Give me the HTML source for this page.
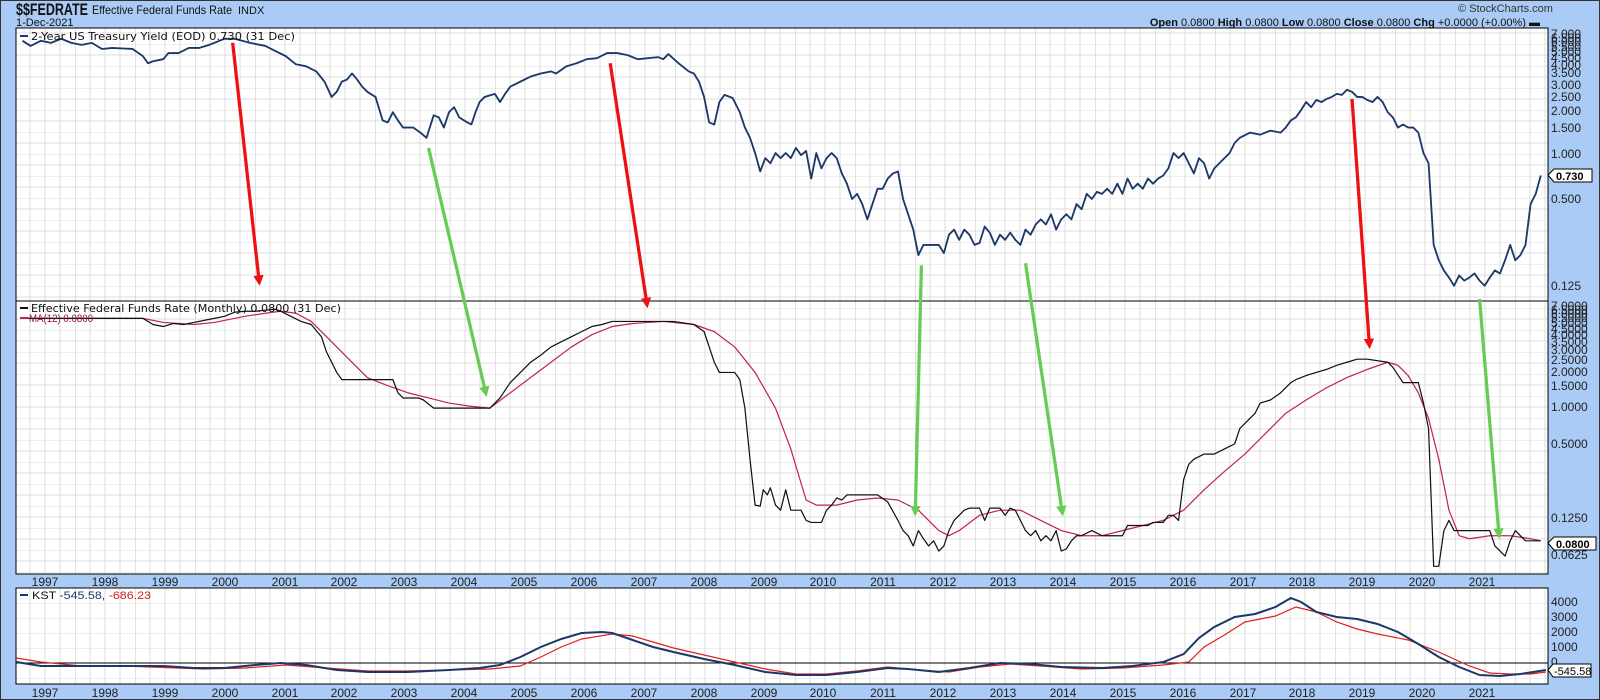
<!DOCTYPE html>
<html><head><meta charset="utf-8"><style>
html,body{margin:0;padding:0;background:#a9cbf5;}
svg{display:block;font-family:"Liberation Sans",sans-serif;}
.ax{font-size:12px;fill:#222;}
</style></head><body>
<svg width="1600" height="700" viewBox="0 0 1600 700" xmlns="http://www.w3.org/2000/svg">
<defs>
<pattern id="g" x="15" y="0" width="60" height="22" patternUnits="userSpaceOnUse">
<rect width="60" height="22" fill="#fff"/>
<path d="M15 0V22M30 0V22M45 0V22M0 11H60M0 0H60" stroke="#dedede" stroke-width="1"/>
<path d="M0 0V22" stroke="#c6c6c6" stroke-width="1"/>
</pattern>
<pattern id="g3" x="15" y="588" width="60" height="15" patternUnits="userSpaceOnUse">
<rect width="60" height="15" fill="#fff"/>
<path d="M15 0V15M30 0V15M45 0V15M0 0H60" stroke="#dedede"/>
<path d="M0 0V15" stroke="#c6c6c6"/>
</pattern>
<marker id="ar" viewBox="0 0 10 10" refX="6" refY="5" markerWidth="3.2" markerHeight="3.2" orient="auto"><path d="M0 0L10 5L0 10z" fill="#ee1111"/></marker>
<marker id="ag" viewBox="0 0 10 10" refX="6" refY="5" markerWidth="3.2" markerHeight="3.2" orient="auto"><path d="M0 0L10 5L0 10z" fill="#66cc55"/></marker>
</defs>
<rect x="0" y="0" width="1600" height="700" fill="#a9cbf5"/>
<rect x="0.5" y="0.5" width="1599" height="699" fill="none" stroke="#333"/>
<text x="16" y="15" font-size="17" font-weight="bold" fill="#111" textLength="72" lengthAdjust="spacingAndGlyphs">$$FEDRATE</text>
<text x="92" y="14" font-size="12" fill="#111" textLength="140" lengthAdjust="spacingAndGlyphs">Effective Federal Funds Rate</text>
<text x="238" y="14" font-size="11" fill="#111">INDX</text>
<text x="16" y="26" font-size="11" fill="#111">1-Dec-2021</text>
<text x="1458" y="12" font-size="11" fill="#333">© StockCharts.com</text>
<text x="1540" y="26" font-size="11" fill="#111" text-anchor="end"><tspan font-weight="bold">Open</tspan> 0.0800  <tspan font-weight="bold">High</tspan> 0.0800  <tspan font-weight="bold">Low</tspan> 0.0800  <tspan font-weight="bold">Close</tspan> 0.0800  <tspan font-weight="bold">Chg</tspan> +0.0000 (+0.00%) ▬</text>

<rect x="16" y="28" width="1532" height="546" fill="url(#g)" stroke="#000"/>
<line x1="16" y1="301" x2="1548" y2="301" stroke="#000"/>
<rect x="16" y="588" width="1532" height="96" fill="url(#g3)" stroke="#000"/>
<line x1="16" y1="663" x2="1548" y2="663" stroke="#000"/>

<g class="ax" text-anchor="middle">
<text x="45" y="586">1997</text><text x="105" y="586">1998</text><text x="165" y="586">1999</text><text x="225" y="586">2000</text><text x="285" y="586">2001</text><text x="344" y="586">2002</text><text x="404" y="586">2003</text><text x="464" y="586">2004</text><text x="524" y="586">2005</text><text x="584" y="586">2006</text><text x="644" y="586">2007</text><text x="704" y="586">2008</text><text x="764" y="586">2009</text><text x="823" y="586">2010</text><text x="883" y="586">2011</text><text x="943" y="586">2012</text><text x="1003" y="586">2013</text><text x="1063" y="586">2014</text><text x="1123" y="586">2015</text><text x="1183" y="586">2016</text><text x="1243" y="586">2017</text><text x="1302" y="586">2018</text><text x="1362" y="586">2019</text><text x="1422" y="586">2020</text><text x="1482" y="586">2021</text>
<text x="45" y="697">1997</text><text x="105" y="697">1998</text><text x="165" y="697">1999</text><text x="225" y="697">2000</text><text x="285" y="697">2001</text><text x="344" y="697">2002</text><text x="404" y="697">2003</text><text x="464" y="697">2004</text><text x="524" y="697">2005</text><text x="584" y="697">2006</text><text x="644" y="697">2007</text><text x="704" y="697">2008</text><text x="764" y="697">2009</text><text x="823" y="697">2010</text><text x="883" y="697">2011</text><text x="943" y="697">2012</text><text x="1003" y="697">2013</text><text x="1063" y="697">2014</text><text x="1123" y="697">2015</text><text x="1183" y="697">2016</text><text x="1243" y="697">2017</text><text x="1302" y="697">2018</text><text x="1362" y="697">2019</text><text x="1422" y="697">2020</text><text x="1482" y="697">2021</text>
</g>

<g class="ax" font-size="11">
<text x="1551" y="38">7.000</text><text x="1551" y="42">6.500</text><text x="1551" y="46">6.000</text><text x="1551" y="51">5.500</text><text x="1551" y="56">5.000</text><text x="1551" y="62">4.500</text><text x="1551" y="69">4.000</text><text x="1551" y="77">3.500</text><text x="1551" y="89">3.000</text><text x="1551" y="101">2.500</text><text x="1551" y="115">2.000</text><text x="1551" y="132">1.500</text><text x="1551" y="158">1.000</text><text x="1551" y="203">0.500</text><text x="1551" y="290">0.125</text>
<text x="1551" y="310">7.0000</text><text x="1551" y="314">6.5000</text><text x="1551" y="318">6.0000</text><text x="1551" y="322">5.5000</text><text x="1551" y="327">5.0000</text><text x="1551" y="333">4.5000</text><text x="1551" y="339">4.0000</text><text x="1551" y="346">3.5000</text><text x="1551" y="354">3.0000</text><text x="1551" y="364">2.5000</text><text x="1551" y="376">2.0000</text><text x="1551" y="390">1.5000</text><text x="1551" y="411">1.0000</text><text x="1551" y="448">0.5000</text><text x="1551" y="522">0.1250</text><text x="1551" y="559">0.0625</text>
<text x="1551" y="606">4000</text><text x="1551" y="621">3000</text><text x="1551" y="636">2000</text><text x="1551" y="651">1000</text><text x="1551" y="666">0</text>
</g>
<path d="M1548 175l6-6h38v13h-38z" fill="#fff" stroke="#000"/><text x="1556" y="180" font-size="11" font-weight="bold">0.730</text>
<path d="M1548 543l6-6h42v13h-42z" fill="#fff" stroke="#000"/><text x="1556" y="548" font-size="11" font-weight="bold">0.0800</text>
<path d="M1548 670l5-6h38v13h-38z" fill="#fff" stroke="#000"/><text x="1554" y="675" font-size="11">-545.58</text>

<g transform="scale(1.0204)" fill="none" stroke-linejoin="round">
<polyline stroke="#1c3868" stroke-width="1.8" points="22,40 30,45 40,40 50,42 60,38 70,42 80,44 90,42 100,48 110,47 130,48 140,55 145,62 150,60 160,58 165,52 175,52 185,47 195,47 205,44 215,40 220,38 230,38 245,42 260,45 270,50 280,55 290,63 300,65 310,70 318,80 325,95 330,90 335,80 340,78 345,72 350,78 355,85 360,90 368,95 375,118 380,120 385,110 390,118 395,125 405,125 412,130 418,135 425,113 430,115 435,125 440,110 445,105 450,115 458,120 462,122 466,110 470,100 475,95 485,92 490,100 495,92 500,85 510,80 520,75 530,72 540,70 545,72 555,65 565,62 575,58 585,57 595,52 605,52 615,54 625,58 635,57 645,56 650,58 655,53 665,62 675,70 680,72 685,80 690,95 695,120 700,122 705,100 710,93 718,96 725,110 730,125 735,135 740,150 745,168 750,155 755,160 760,150 765,155 770,150 775,155 780,145 785,152 790,148 795,175 800,150 805,165 810,155 815,150 820,155 825,170 830,180 835,195 840,190 845,200 850,215 855,200 860,185 865,185 870,175 875,170 880,168 885,195 890,210 895,225 900,250 905,240 915,240 920,240 925,248 930,230 935,225 940,235 945,225 950,230 955,240 960,238 965,222 970,228 975,240 980,230 985,235 990,228 995,235 1000,240 1005,225 1010,230 1015,220 1020,215 1025,220 1030,210 1035,225 1040,215 1045,210 1050,215 1055,200 1060,205 1065,190 1070,195 1075,188 1080,190 1085,185 1090,190 1095,180 1100,190 1105,175 1110,185 1115,180 1120,185 1125,175 1130,180 1135,175 1140,172 1145,165 1150,150 1155,155 1160,150 1165,160 1170,170 1175,155 1180,160 1185,175 1190,165 1195,160 1200,155 1205,150 1210,140 1215,135 1225,130 1235,132 1245,128 1255,130 1260,125 1265,118 1270,115 1275,108 1280,100 1285,105 1290,98 1295,100 1300,97 1305,95 1310,92 1315,93 1320,88 1325,90 1330,95 1335,95 1340,98 1345,100 1350,95 1355,100 1360,110 1365,115 1370,125 1375,122 1380,125 1385,125 1390,130 1395,150 1400,160 1405,240 1410,255 1415,265 1420,272 1425,280 1430,270 1435,275 1440,272 1445,268 1450,275 1455,280 1460,272 1465,265 1470,268 1475,255 1480,240 1485,255 1490,250 1495,240 1500,200 1505,190 1510,172"/>
<polyline stroke="#c0264a" stroke-width="1.2" points="20,312 140,312 160,316 190,318 210,316 240,310 260,307 275,305 290,307 305,315 320,330 340,350 360,370 380,378 400,385 420,390 440,395 460,398 480,400 500,385 520,370 540,355 560,340 580,328 600,320 620,317 650,315 680,318 700,325 720,340 740,365 760,400 775,440 790,490 800,495 820,495 840,490 860,488 880,490 900,500 920,520 930,525 940,520 960,505 980,500 1000,500 1020,510 1040,520 1060,525 1080,525 1100,520 1120,515 1140,510 1160,500 1180,480 1200,462 1220,445 1240,425 1260,405 1280,392 1300,380 1320,370 1340,362 1360,355 1370,358 1380,368 1390,385 1400,410 1410,450 1420,500 1430,525 1440,528 1460,525 1480,525 1500,528 1510,530"/>
<polyline stroke="#111" stroke-width="1.2" points="20,312 140,312 150,318 160,320 170,317 180,318 190,316 200,314 210,312 220,310 230,306 240,305 250,305 260,304 270,303 275,305 285,310 295,315 305,318 315,330 320,345 330,365 335,372 385,372 390,385 395,390 410,390 415,392 425,400 480,400 490,390 500,375 510,365 520,355 530,348 540,340 550,335 560,330 570,325 580,320 590,318 600,315 660,315 680,318 690,325 695,340 700,355 705,365 720,365 725,372 730,400 735,450 740,495 745,496 748,480 752,485 755,478 760,495 765,500 770,480 775,500 785,500 790,510 795,512 805,512 810,500 815,495 820,488 825,490 830,485 860,485 870,492 880,510 885,520 890,525 895,535 900,520 905,528 910,535 915,530 920,540 925,535 930,520 935,510 945,500 950,498 960,498 965,510 970,498 980,498 985,505 990,498 995,500 1000,510 1005,520 1010,525 1015,520 1020,530 1025,525 1030,530 1035,520 1040,540 1045,538 1050,530 1055,525 1060,525 1070,520 1080,525 1100,525 1105,515 1125,515 1130,512 1140,512 1145,505 1150,505 1155,510 1160,470 1165,455 1170,450 1180,445 1190,445 1200,440 1210,435 1215,420 1225,410 1230,405 1235,395 1245,392 1255,385 1265,375 1270,372 1280,368 1290,365 1300,362 1310,358 1320,355 1330,352 1340,352 1360,355 1365,360 1375,375 1390,375 1395,395 1400,420 1405,555 1410,555 1415,520 1420,510 1425,520 1460,520 1465,535 1475,545 1480,530 1485,520 1490,525 1495,530 1510,530"/>
<g stroke-width="3.2">
<line x1="228" y1="42" x2="254" y2="276" stroke="#ee1111" marker-end="url(#ar)"/>
<line x1="598" y1="62" x2="634" y2="298" stroke="#ee1111" marker-end="url(#ar)"/>
<line x1="1325" y1="97" x2="1342" y2="338" stroke="#ee1111" marker-end="url(#ar)"/>
<line x1="420" y1="145" x2="476" y2="385" stroke="#66cc55" marker-end="url(#ag)"/>
<line x1="903" y1="260" x2="897" y2="502" stroke="#66cc55" marker-end="url(#ag)"/>
<line x1="1005" y1="258" x2="1041" y2="502" stroke="#66cc55" marker-end="url(#ag)"/>
<line x1="1450" y1="293" x2="1469" y2="524" stroke="#66cc55" marker-end="url(#ag)"/>
</g>
</g>

<g transform="matrix(1.0204 0 0 1 0 2)" fill="none">
<polyline stroke="#e02020" stroke-width="1.2" points="16,656 40,660 80,664 120,664 200,667 240,666 280,663 320,666 360,669 400,669 440,668 480,667 510,664 530,655 550,645 570,637 600,632 620,634 640,640 660,646 690,653 720,660 750,667 780,672 810,672 840,669 870,665 900,668 930,670 960,665 990,662 1020,664 1060,667 1100,666 1140,663 1165,660 1180,645 1200,633 1220,620 1250,614 1270,605 1290,610 1310,620 1330,627 1350,632 1380,638 1410,650 1440,664 1460,671 1480,672 1500,672 1515,670"/>
<polyline stroke="#1c3868" stroke-width="2" points="16,660 40,664 100,664 160,664 190,666 220,666 250,663 275,661 300,663 330,668 360,670 400,670 440,668 470,666 490,663 510,655 530,645 550,637 570,631 590,630 600,631 620,638 640,645 660,650 690,657 720,663 750,670 780,673 810,673 840,670 870,666 890,667 920,670 950,666 980,661 1010,662 1040,665 1080,666 1110,664 1140,660 1160,652 1175,636 1190,625 1210,615 1230,612 1250,605 1265,596 1275,600 1290,610 1310,615 1330,617 1350,622 1370,630 1390,642 1410,655 1430,665 1450,673 1470,674 1490,672 1515,668"/>
</g>

<line x1="20" y1="36" x2="28" y2="36" stroke="#1c3868" stroke-width="2"/>
<text x="31" y="40" font-family="DejaVu Sans, sans-serif" font-size="11" fill="#111" textLength="264" lengthAdjust="spacingAndGlyphs">2-Year US Treasury Yield (EOD) 0.730 (31 Dec)</text>
<line x1="20" y1="308" x2="28" y2="308" stroke="#111" stroke-width="2"/>
<text x="31" y="312" font-family="DejaVu Sans, sans-serif" font-size="11" fill="#111" textLength="310" lengthAdjust="spacingAndGlyphs">Effective Federal Funds Rate (Monthly) 0.0800 (31 Dec)</text>
<line x1="20" y1="318" x2="28" y2="318" stroke="#c0264a" stroke-width="2"/>
<text x="29" y="322" font-size="11" fill="#a01838" textLength="64" lengthAdjust="spacingAndGlyphs">MA(12) 0.0800</text>
<line x1="20" y1="595" x2="28" y2="595" stroke="#1c3868" stroke-width="2"/>
<text x="32" y="599" font-size="11" fill="#111" textLength="119" lengthAdjust="spacingAndGlyphs">KST <tspan fill="#1c3868">-545.58,</tspan> <tspan fill="#d02020">-686.23</tspan></text>
</svg>
</body></html>
